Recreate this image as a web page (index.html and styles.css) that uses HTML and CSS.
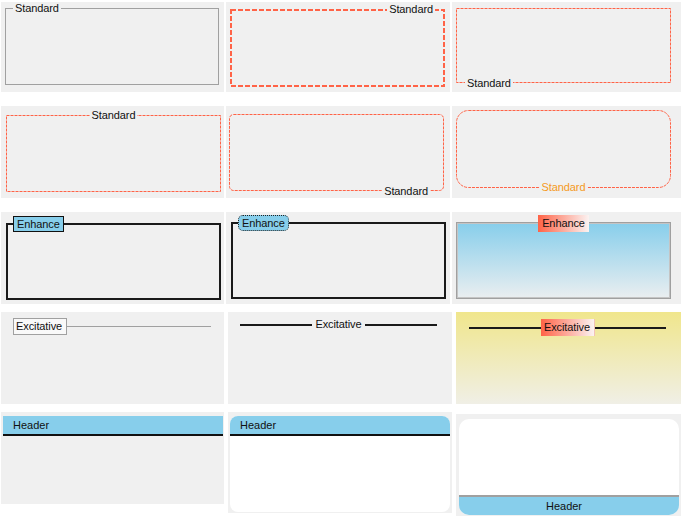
FILE: index.html
```html
<!DOCTYPE html>
<html>
<head>
<meta charset="utf-8">
<link rel="stylesheet" href="styles.css">
</head>
<body>
<div class="board">
  <div class="row r1">
    <section class="panel c1 p1">
      <div class="frame f1"><span class="title t1">Standard</span></div>
    </section>
    <section class="panel c2 p2">
      <div class="frame f2">
        <svg class="edge" width="215" height="78"><rect x="1" y="1" width="213" height="76" fill="none" stroke="#ff6347" stroke-width="2" stroke-dasharray="5 2"/></svg>
        <span class="title t2">Standard</span>
      </div>
    </section>
    <section class="panel c3 p3">
      <div class="frame f3">
        <svg class="edge" width="215" height="75"><rect x="0.5" y="0.5" width="214" height="74" fill="none" stroke="#ff6347" stroke-width="1" stroke-dasharray="3 1"/></svg>
        <span class="title t3">Standard</span>
      </div>
    </section>
  </div>
  <div class="row r2">
    <section class="panel c1 p4">
      <div class="frame f4">
        <svg class="edge" width="215" height="77"><rect x="0.5" y="0.5" width="214" height="76" fill="none" stroke="#ff6347" stroke-width="1" stroke-dasharray="3 1"/></svg>
        <span class="title t4">Standard</span>
      </div>
    </section>
    <section class="panel c2 p5">
      <div class="frame f5">
        <svg class="edge" width="215" height="77"><rect x="0.5" y="0.5" width="214" height="76" rx="4" fill="none" stroke="#ff6347" stroke-width="1" stroke-dasharray="3 1"/></svg>
        <span class="title t5">Standard</span>
      </div>
    </section>
    <section class="panel c3 p6">
      <div class="frame f6">
        <svg class="edge" width="215" height="78"><rect x="0.5" y="0.5" width="214" height="77" rx="12" fill="none" stroke="#ff6347" stroke-width="1" stroke-dasharray="3 1"/></svg>
        <span class="title t6">Standard</span>
      </div>
    </section>
  </div>
  <div class="row r3">
    <section class="panel c1 p7">
      <div class="frame f7"><span class="badge b7">Enhance</span></div>
    </section>
    <section class="panel c2 p8">
      <div class="frame f8"><span class="badge b8">Enhance</span></div>
    </section>
    <section class="panel c3 p9">
      <div class="frame f9"><span class="badge b9">Enhance</span></div>
    </section>
  </div>
  <div class="row r4">
    <section class="panel c1 p10">
      <div class="rule-head">
        <span class="chip chip-plain">Excitative</span>
        <span class="rule rule-gray"></span>
      </div>
    </section>
    <section class="panel c2b p11">
      <div class="rule-head">
        <span class="rule rule-dark"></span>
        <span class="rule-text">Excitative</span>
        <span class="rule rule-dark"></span>
      </div>
    </section>
    <section class="panel c3b p12">
      <div class="rule-head">
        <span class="rule rule-dark"></span>
        <span class="chip chip-warm">Excitative</span>
        <span class="rule rule-dark"></span>
      </div>
    </section>
  </div>
  <div class="row r5">
    <section class="panel c1 p13">
      <div class="header h-top">Header</div>
    </section>
    <section class="panel c2b p14">
      <div class="card card14">
        <div class="header h-top">Header</div>
      </div>
    </section>
    <section class="panel c3b p15">
      <div class="card card15">
        <div class="card-body"></div>
        <div class="header h-bottom">Header</div>
      </div>
    </section>
  </div>
</div>
</body>
</html>
```
FILE: styles.css
```css
* { box-sizing: border-box; }
html, body { margin: 0; background: #ffffff; }
body {
  font-family: "Liberation Sans", Arial, sans-serif;
  font-size: 11px;
  line-height: 13px;
  color: #111;
}
.board { display: flex; flex-direction: column; padding: 2px 0 0 1px; }
.row { display: flex; align-items: flex-start; }
.r2 { margin-top: 14px; }
.r3 { margin-top: 14px; }
.r4 { margin-top: 8px; }
.r5 { margin-top: 8px; }

.panel { background: #f0f0f0; flex: none; height: 92px; }
.r1 .panel { height: 90px; }
.c1 { width: 223px; }
.c2 { width: 224px; margin-left: 2px; }
.c3 { width: 229px; margin-left: 2px; }
.c2b { width: 224px; margin-left: 4px; }
.c3b { width: 225px; margin-left: 4px; }

.frame { position: relative; width: 215px; height: 77px; }
.edge { position: absolute; left: 0; top: 0; display: block; }

.title {
  position: absolute;
  padding: 0 2px;
  background: #f0f0f0;
  white-space: nowrap;
  letter-spacing: -0.1px;
}

/* row 1 */
.p1 { padding: 6px 0 0 4px; }
.f1 { width: 214px; border: 1px solid #a0a0a0; }
.t1 { left: 7px; top: -7px; }

.p2 { padding: 7px 0 0 4px; }
.f2 { height: 78px; }
.t2 { right: 10px; top: -6px; }

.p3 { padding: 6px 0 0 4px; }
.f3 { height: 75px; }
.t3 { left: 9px; bottom: -7px; }

/* row 2 */
.p4 { padding: 9px 0 0 5px; }
.t4 { left: 0; right: 0; margin: 0 auto; width: max-content; top: -6px; }

.p5 { padding: 8px 0 0 3px; }
.t5 { right: 14px; bottom: -7px; }

.p6 { padding: 4px 0 0 4px; }
.f6 { height: 78px; }
.t6 { left: 0; right: 0; margin: 0 auto; width: max-content; bottom: -6px; color: #f59a23; }

/* row 3 */
.badge {
  position: absolute;
  height: 16px;
  line-height: 14px;
  padding: 0 3px;
  white-space: nowrap;
  letter-spacing: -0.1px;
}
.p7 { padding: 11px 0 0 5px; }
.f7 { border: 2px solid #1a1a1a; }
.b7 { left: 5px; top: -9px; width: 51px; background: #87ceeb; border: 1px solid #111; }

.p8 { padding: 10px 0 0 5px; }
.f8 { border: 2px solid #1a1a1a; }
.b8 { left: 5px; top: -9px; width: 51px; background: #87ceeb; border: 1px dotted #222; border-radius: 5px; }

.p9 { padding: 10px 0 0 4px; }
.f9 { border: 1px solid #a0a0a0; box-shadow: inset 0 0 0 1px #c4c4c4; background: linear-gradient(to bottom, #87ceeb, #eaeef0); }
.b9 {
  left: 0; right: 0; margin: 0 auto; top: -8px; width: 51px; height: 17px; line-height: 17px;
  background: linear-gradient(to right, #ff6347, #fbf3f2);
  text-align: center; padding: 0;
}

/* row 4 */
.rule-head { display: flex; align-items: center; }
.rule { flex: 1; }
.rule-gray { height: 1px; background: #a0a0a0; }
.rule-dark { height: 2px; background: #1a1a1a; }
.chip { height: 17px; line-height: 15px; padding: 0 2px; white-space: nowrap; letter-spacing: -0.1px; }
.chip-plain { border: 1px solid #a0a0a0; background: #f9f9f9; width: 54px; }
.chip-warm { background: linear-gradient(to right, #ff6347, #fbf3f2); width: 54px; text-align: center; line-height: 17px; border-right: 1px solid #f3c2b8; }
.rule-text { padding: 0 3px; letter-spacing: -0.1px; }

.p10 { padding: 6px 13px 0 12px; }
.p11 { padding: 6px 15px 0 12px; }
.p12 { padding: 7px 15px 0 13px; background: linear-gradient(to bottom, #f0e68c, #f0efe6); }

/* row 5 */
.header {
  height: 20px;
  background: #87ceeb;
  line-height: 18px;
  white-space: nowrap;
}
.h-top { border-bottom: 2px solid #111; padding-left: 10px; }
.h-bottom { border-top: 2px solid #a0a0a0; text-align: center; padding-right: 10px; }

.p13 { padding: 4px 1px 0 2px; }
.p14 { height: 101px; padding: 4px 2px 1px 2px; }
.p15 { height: 102px; margin-top: 2px; padding: 5px 2px 1px 3px; }

.card { background: #ffffff; overflow: hidden; display: flex; flex-direction: column; }
.card14 { height: 96px; border-radius: 8px; }
.card15 { height: 96px; border-radius: 10px; }
.card-body { flex: 1; }
```
